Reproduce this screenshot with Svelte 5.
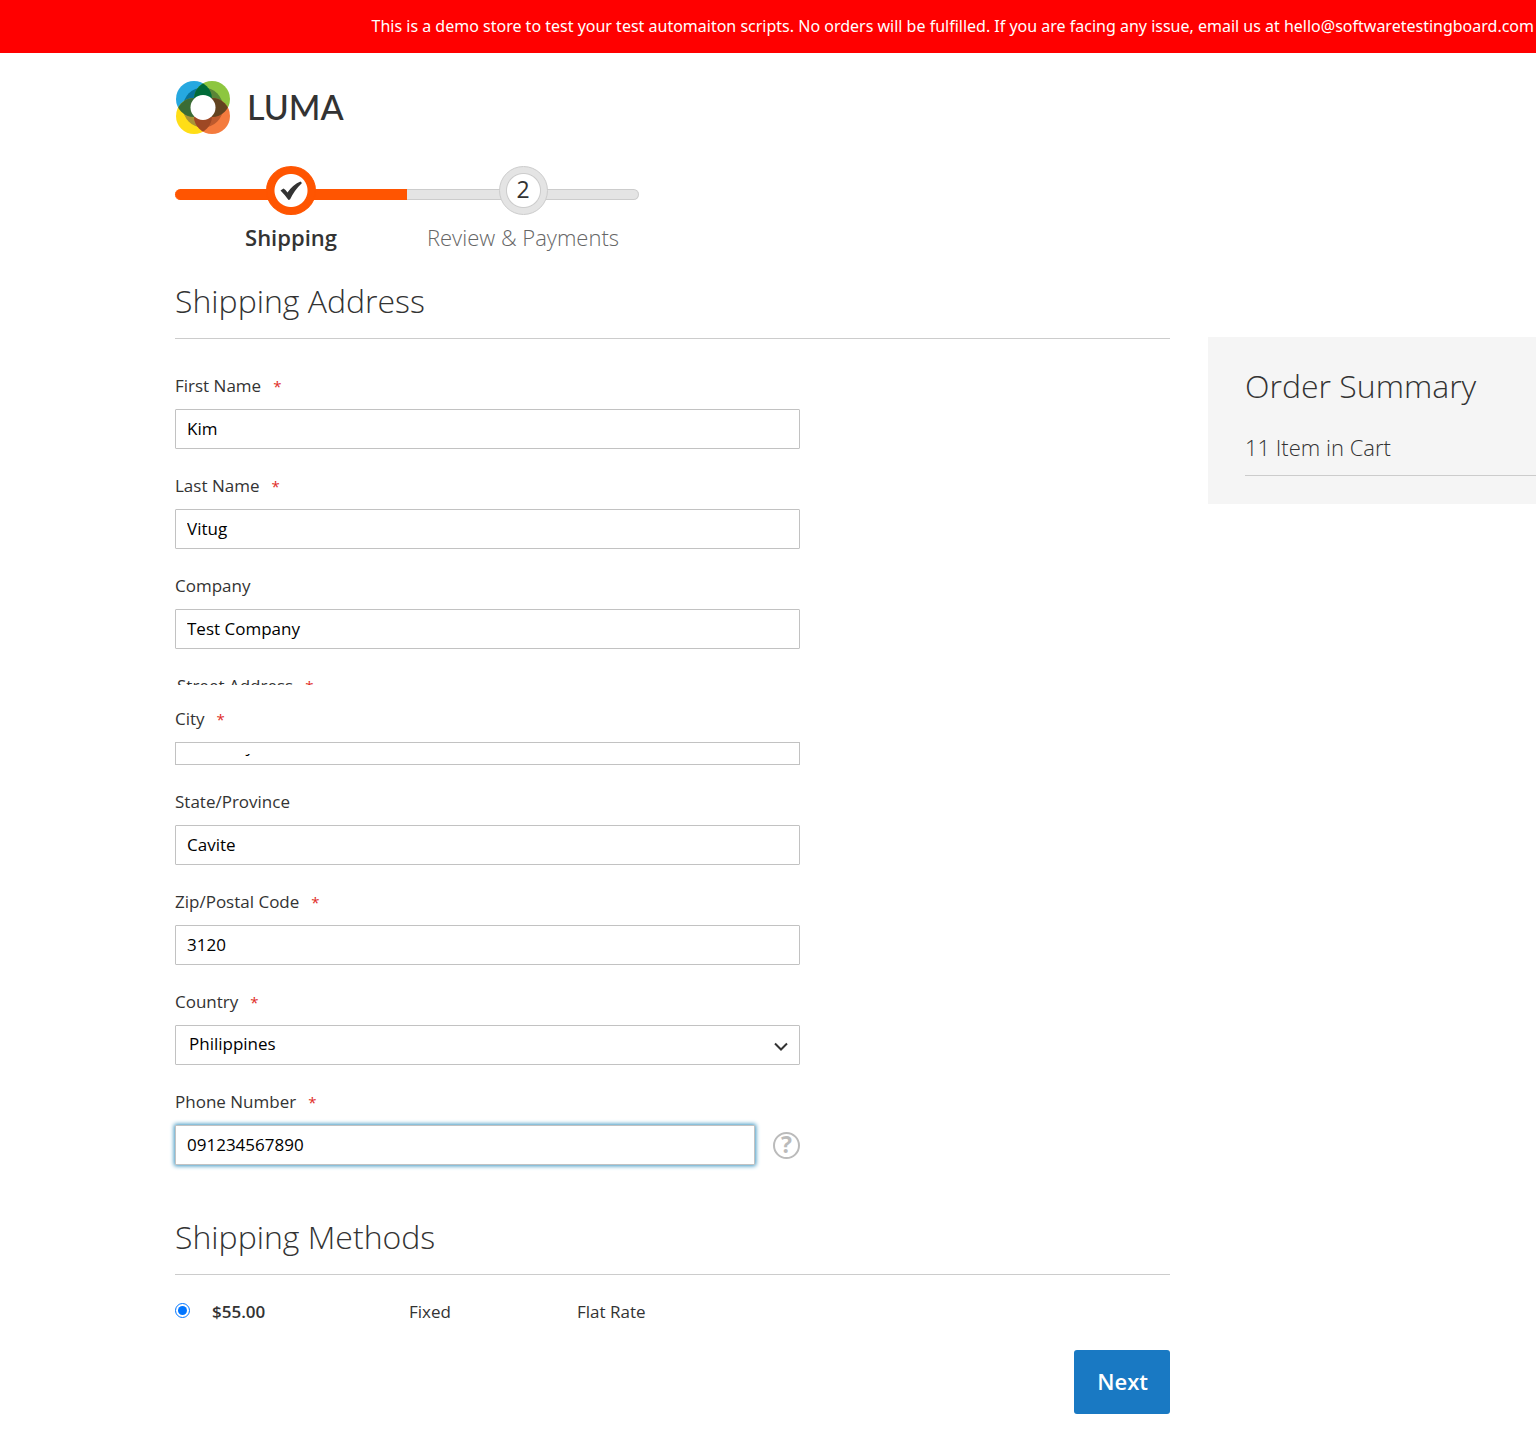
<script>
  const before = [
    { id: 'first', label: 'First Name', value: 'Kim', required: true },
    { id: 'last', label: 'Last Name', value: 'Vitug', required: true },
    { id: 'company', label: 'Company', value: 'Test Company', required: false }
  ];
  const after = [
    { id: 'state', label: 'State/Province', value: 'Cavite', required: false },
    { id: 'zip', label: 'Zip/Postal Code', value: '3120', required: true }
  ];
</script>

{#snippet caption(id, text, required)}
  <label for={id}>{text}{#if required}<span class="star">*</span>{/if}</label>
{/snippet}

{#snippet textField(f)}
  <div class="field">
    {@render caption(f.id, f.label, f.required)}
    <input class="box" id={f.id} type="text" value={f.value} />
  </div>
{/snippet}

<div class="banner">This is a demo store to test your test automaiton scripts. No orders will be fulfilled. If you are facing any issue, email us at hello@softwaretestingboard.com</div>

<div class="page">
  <header>
    <a class="logo" href="#home" aria-label="Luma">
      <svg width="56" height="54" viewBox="0 0 56 54" aria-hidden="true">
        <defs>
          <clipPath id="tl"><circle cx="19" cy="18" r="18" /></clipPath>
          <clipPath id="tr"><circle cx="37" cy="18" r="18" /></clipPath>
          <clipPath id="bl"><circle cx="19" cy="35" r="18" /></clipPath>
          <clipPath id="br"><circle cx="37" cy="35" r="18" /></clipPath>
        </defs>
        <circle cx="19" cy="18" r="18" fill="#26a8e0" />
        <circle cx="37" cy="18" r="18" fill="#8dc63f" />
        <circle cx="19" cy="35" r="18" fill="#ffde17" />
        <circle cx="37" cy="35" r="18" fill="#f47b3e" />
        <circle cx="28" cy="26.500" r="20" fill="#087399" clip-path="url(#tl)" />
        <circle cx="28" cy="26.500" r="20" fill="#5a8537" clip-path="url(#tr)" />
        <circle cx="28" cy="26.500" r="20" fill="#a89436" clip-path="url(#bl)" />
        <circle cx="28" cy="26.500" r="20" fill="#bd5a2d" clip-path="url(#br)" />
        <g clip-path="url(#tl)">
          <circle cx="37" cy="18" r="18" fill="#006b38" />
          <circle cx="19" cy="35" r="18" fill="#3a6c35" />
        </g>
        <g clip-path="url(#br)">
          <circle cx="19" cy="35" r="18" fill="#9e4824" />
          <circle cx="37" cy="18" r="18" fill="#624320" />
        </g>
        <circle cx="28" cy="26.500" r="12.500" fill="#fff" />
      </svg>
      <span>LUMA</span>
    </a>
  </header>

  <div class="columns">
    <main>
      <ol class="steps">
        <li class="done">
          <span class="dot">
            <svg width="22" height="20" viewBox="0 0 22 20" aria-hidden="true"><path d="M0.500 9.500 L3.500 7.500 Q5.500 8.500 7.500 11.500 Q13 3.500 20.500 0.500 L22 2 Q14.500 9 10 18.500 L8.500 19 Q5 14 0.500 9.500Z" fill="#333" /></svg>
          </span>
          <span class="name">Shipping</span>
        </li>
        <li>
          <span class="dot">2</span>
          <span class="name">Review &amp; Payments</span>
        </li>
      </ol>

      <h2>Shipping Address</h2>
      <form class="fields" id="checkout">
        {#each before as f}{@render textField(f)}{/each}
        <div class="field street"><span>Street Address<span class="star">*</span></span></div>
        <div class="field city">
          {@render caption('city', 'City', true)}
          <div class="short"><input id="city" type="text" value="Test City" /></div>
        </div>
        {#each after as f}{@render textField(f)}{/each}
        <div class="field">
          {@render caption('country', 'Country', true)}
          <div class="pick">
            <select class="box" id="country"><option>Philippines</option></select>
            <svg width="14" height="9" viewBox="0 0 14 9" aria-hidden="true"><path d="M1 1.500 L7 7.500 L13 1.500" fill="none" stroke="#333" stroke-width="2" /></svg>
          </div>
        </div>
        <div class="field">
          {@render caption('phone', 'Phone Number', true)}
          <div class="phone">
            <input class="box focus" id="phone" type="tel" value="091234567890" />
            <button type="button" class="help" aria-label="Help">?</button>
          </div>
        </div>
      </form>

      <h2 class="methods-title">Shipping Methods</h2>
      <table>
        <tbody>
          <tr>
            <td class="pickcell"><input type="radio" name="method" id="flat" checked aria-label="Flat Rate" /></td>
            <td class="price"><label for="flat">$55.00</label></td>
            <td class="kind">Fixed</td>
            <td>Flat Rate</td>
          </tr>
        </tbody>
      </table>
      <div class="actions"><button class="next" type="submit" form="checkout">Next</button></div>
    </main>

    <aside>
      <h3>Order Summary</h3>
      <p>11 Item in Cart</p>
    </aside>
  </div>
</div>

<style>
  :global(body) { margin: 0; background: #fff; }
  :global(#app) { font-family: 'Open Sans', 'Noto Sans', sans-serif; font-size: 17px; color: #333; overflow-x: hidden; }
  *, *::before { box-sizing: border-box; }
  input, select, button { font-family: inherit; }
  .banner { background: #f00; color: #fff; font-family: 'Noto Sans', 'Open Sans', sans-serif; font-size: 16px; line-height: 23px; padding: 15px 2px 15px 16px; text-align: right; }
  .page { padding-left: 175px; }
  header { padding-top: 28px; }
  .logo { display: flex; align-items: center; gap: 16px; height: 54px; width: max-content; color: #333; text-decoration: none; }
  .logo span { font-family: Lato, sans-serif; font-size: 34px; line-height: 50px; padding-bottom: 2px; font-weight: 500; }
  .columns { display: flex; gap: 38px; align-items: flex-start; }
  main { flex: 1; min-width: 0; padding-top: 31px; }
  .steps { display: flex; list-style: none; margin: 0; padding: 0; width: 464px; }
  .steps li { flex: 1; display: flex; flex-direction: column; align-items: center; position: relative; }
  .steps li::before { content: ''; position: absolute; left: 0; right: 0; top: 23px; height: 11px; background: #e4e4e4; border: 1px solid #ccc; border-left: 0; border-radius: 0 6px 6px 0; }
  .steps .done::before { background: #ff5501; border-color: #ff5501; border-radius: 6px 0 0 6px; }
  .dot { position: relative; width: 49px; height: 49px; border-radius: 50%; border: 1px solid #ccc; background: radial-gradient(circle, #fff 16px, #ccc 17px, #ccc 17px, #e4e4e4 18px); display: grid; place-items: center; font-size: 23px; line-height: 24px; padding-bottom: 4px; background-origin: border-box; font-weight: 500; }
  .done .dot { width: 50px; border-color: #ff5501; background: radial-gradient(circle, #fff 16px, #ff5501 17px) border-box; padding-bottom: 0; }
  .name { margin-top: 6px; padding-bottom: 1px; font-size: 22px; line-height: 32px; font-weight: 300; color: #666; }
  .done .name { font-weight: 600; color: #333; }
  h2, h3 { font-size: 32px; line-height: 42px; padding-bottom: 2px; font-weight: 300; margin: 0; }
  h2 { margin-top: 26px; padding-bottom: 16px; border-bottom: 1px solid #ccc; }
  .fields { display: flex; flex-direction: column; gap: 26px; max-width: 625px; padding-top: 36px; }
  .field { display: flex; flex-direction: column; gap: 12px; }
  label { line-height: 22px; }
  .star { color: #e02b27; font-size: 15px; margin-left: 12px; }
  .box { width: 100%; height: 40px; border: 1px solid #c2c2c2; border-radius: 1px; background: #fff; padding: 0 11px 2px; font-size: 17px; color: #000; outline: none; }
  .street { height: 10px; overflow: hidden; display: block; line-height: 22px; padding-left: 2px; }
  .city { margin-top: -3px; }
  .short { height: 23px; border: 1px solid #c2c2c2; }
  .short input { display: block; width: 100%; height: 21px; border: 0; outline: 0; background: none; padding: 0 11px 16px; font-size: 17px; clip-path: inset(11px 0 6px 0); color: #000; }
  .pick { position: relative; }
  .pick .box { appearance: none; padding-left: 13px; padding-bottom: 4px; }
  .pick svg { position: absolute; right: 12px; top: 17px; pointer-events: none; }
  .phone { display: flex; align-items: center; gap: 18px; }
  .phone .box { flex: 1; min-width: 0; }
  .focus { box-shadow: 0 0 4px 1px #3a94c0; }
  .help { width: 27px; height: 27px; padding: 0; border: 2px solid #bbb; border-radius: 50%; background: none; color: #bbb; font-weight: 700; font-size: 23px; line-height: 20px; padding-bottom: 2px; }
  .methods-title { margin-top: 51px; }
  table { border-collapse: collapse; margin-top: 24px; line-height: 26px; }
  td { padding: 0; }
  .pickcell { width: 37px; vertical-align: top; }
  .pickcell input { display: block; width: 15px; height: 15px; margin: 4px 0 0; accent-color: #0075ff; }
  .price { width: 197px; font-weight: 600; }
  .kind { width: 168px; }
  .actions { display: flex; justify-content: flex-end; padding: 25px 0 26px; }
  .next { border: 0; border-radius: 3px; background: #1979c3; color: #fff; font-size: 22px; line-height: 30px; font-weight: 600; padding: 16px 22px 18px 23px; }
  aside { width: 328px; margin-top: 202px; background: #f5f5f5; padding: 28px 0 28px 37px; }
  aside p { margin: 21px 0 0; padding-bottom: 10px; font-size: 22px; line-height: 35px; font-weight: 300; border-bottom: 1px solid #ccc; }
</style>
